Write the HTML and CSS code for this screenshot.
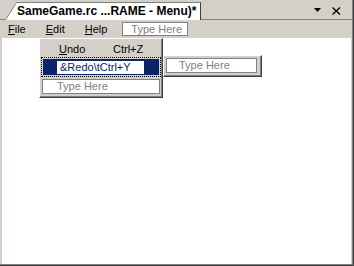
FILE: index.html
```html
<!DOCTYPE html>
<html lang="en">
<head>
  <meta charset="UTF-8" />
  <title>SameGame.rc - Menu</title>
  <link rel="stylesheet" href="styles.css">
</head>
<body>
  <div class="window">
    <div class="tabbar">
      <div class="tab">
        <svg class="tab-edge" width="12" height="18" viewBox="0 0 12 18">
          <path d="M0 18 L11 1 L12 1 L12 18 Z" fill="#fff"/>
          <path d="M0.5 18 L11.5 0.5 H12" stroke="#808080" fill="none"/>
        </svg>
        <span class="tab-label">SameGame.rc ...RAME - Menu)*</span>
      </div>
      <div class="tab-tools">
        <svg width="8" height="5" viewBox="0 0 8 5"><path d="M0 0 H7 L3.5 4 Z" fill="#000"/></svg>
        <svg width="9" height="8" viewBox="0 0 9 8"><path d="M0.5 0.5 L8 7.5 M8 0.5 L0.5 7.5" stroke="#000" stroke-width="1.3"/></svg>
      </div>
    </div>

    <div class="menubar">
      <span class="menu-item"><u>F</u>ile</span>
      <span class="menu-item"><u>E</u>dit</span>
      <span class="menu-item"><u>H</u>elp</span>
      <span class="type-here">Type Here</span>
    </div>

    <div class="client">
      <div class="dropdown">
        <div class="row">
          <span class="label"><u>U</u>ndo</span>
          <span>Ctrl+Z</span>
        </div>
        <div class="row selected">
          <div class="sel-fill">
            <span class="edit-box">&amp;Redo\tCtrl+Y</span>
          </div>
        </div>
        <div class="row-new">Type Here</div>
      </div>

      <div class="submenu">
        <div class="sub-box">Type Here</div>
      </div>
    </div>
  </div>
</body>
</html>
```

FILE: styles.css
```css
* {
  box-sizing: border-box;
}

body {
  margin: 0;
  font-family: "Liberation Sans", Arial, sans-serif;
  font-size: 11px;
  color: #000;
  background-color: #d4d0c8;
}

.window {
  width: 354px;
  height: 266px;
  display: flex;
  flex-direction: column;
  border-right: 1px solid #404040;
  border-bottom: 1px solid #404040;
  box-shadow: inset -1px -1px 0 #808080;
}

.tabbar {
  height: 20px;
  display: flex;
  align-items: flex-end;
  padding-left: 5px;
  border-bottom: 1px solid #808080;
  margin-right: 1px;
}

.tab {
  display: flex;
  align-items: flex-end;
  height: 18px;
  margin-bottom: -1px;
}

.tab-edge {
  display: block;
}

.tab-label {
  height: 18px;
  line-height: 17px;
  padding: 0 4px 0 0;
  background-color: #fff;
  border-top: 1px solid #808080;
  border-right: 1px solid #404040;
  font-weight: bold;
  font-size: 12px;
  white-space: nowrap;
}

.tab-tools {
  margin-left: auto;
  display: flex;
  align-items: center;
  gap: 10px;
  height: 19px;
  padding-right: 11px;
  padding-top: 2px;
}

.tab-tools svg {
  display: block;
}

.menubar {
  height: 18px;
  display: flex;
  align-items: center;
  gap: 20px;
  padding-left: 8px;
}

.menu-item u {
  text-decoration-thickness: 1px;
}

.type-here {
  margin-left: -5px;
  width: 66px;
  height: 14px;
  line-height: 12px;
  padding-left: 8px;
  color: #808080;
  background-color: #fff;
  border: 1px solid #808080;
}

.client {
  position: relative;
  flex: 1;
  margin: 0 2px 1px 2px;
  background-color: #fff;
}

.dropdown {
  position: absolute;
  left: 37px;
  top: 0;
  width: 124px;
  height: 60px;
  padding: 1px;
  background-color: #d4d0c8;
  border-top: 1px solid #fff;
  border-left: 1px solid #fff;
  border-right: 1px solid #404040;
  border-bottom: 1px solid #404040;
  box-shadow: inset -1px -1px 0 #808080;
}

.row {
  height: 17px;
  display: flex;
  align-items: center;
  padding-left: 18px;
}

.row .label {
  width: 54px;
}

.row.selected {
  height: 20px;
  padding: 1px;
  border: 1px dotted #000;
}

.sel-fill {
  width: 100%;
  height: 100%;
  display: flex;
  align-items: center;
  padding-left: 14px;
  background-color: #0a246a;
}

.edit-box {
  width: 87px;
  height: 13px;
  line-height: 13px;
  padding-left: 3px;
  color: #0a246a;
  background-color: #fff;
}

.row-new {
  height: 15px;
  margin: 2px 1px 0 1px;
  line-height: 13px;
  padding-left: 14px;
  color: #808080;
  background-color: #fff;
  border: 1px solid #808080;
}

.submenu {
  position: absolute;
  left: 161px;
  top: 17px;
  width: 99px;
  height: 22px;
  padding: 2px 4px 2px 2px;
  background-color: #d4d0c8;
  border-top: 1px solid #fff;
  border-left: 1px solid #fff;
  border-right: 1px solid #404040;
  border-bottom: 1px solid #404040;
  box-shadow: inset -1px -1px 0 #808080;
}

.sub-box {
  height: 15px;
  line-height: 13px;
  padding-left: 12px;
  color: #808080;
  background-color: #fff;
  border: 1px solid #808080;
}
```
